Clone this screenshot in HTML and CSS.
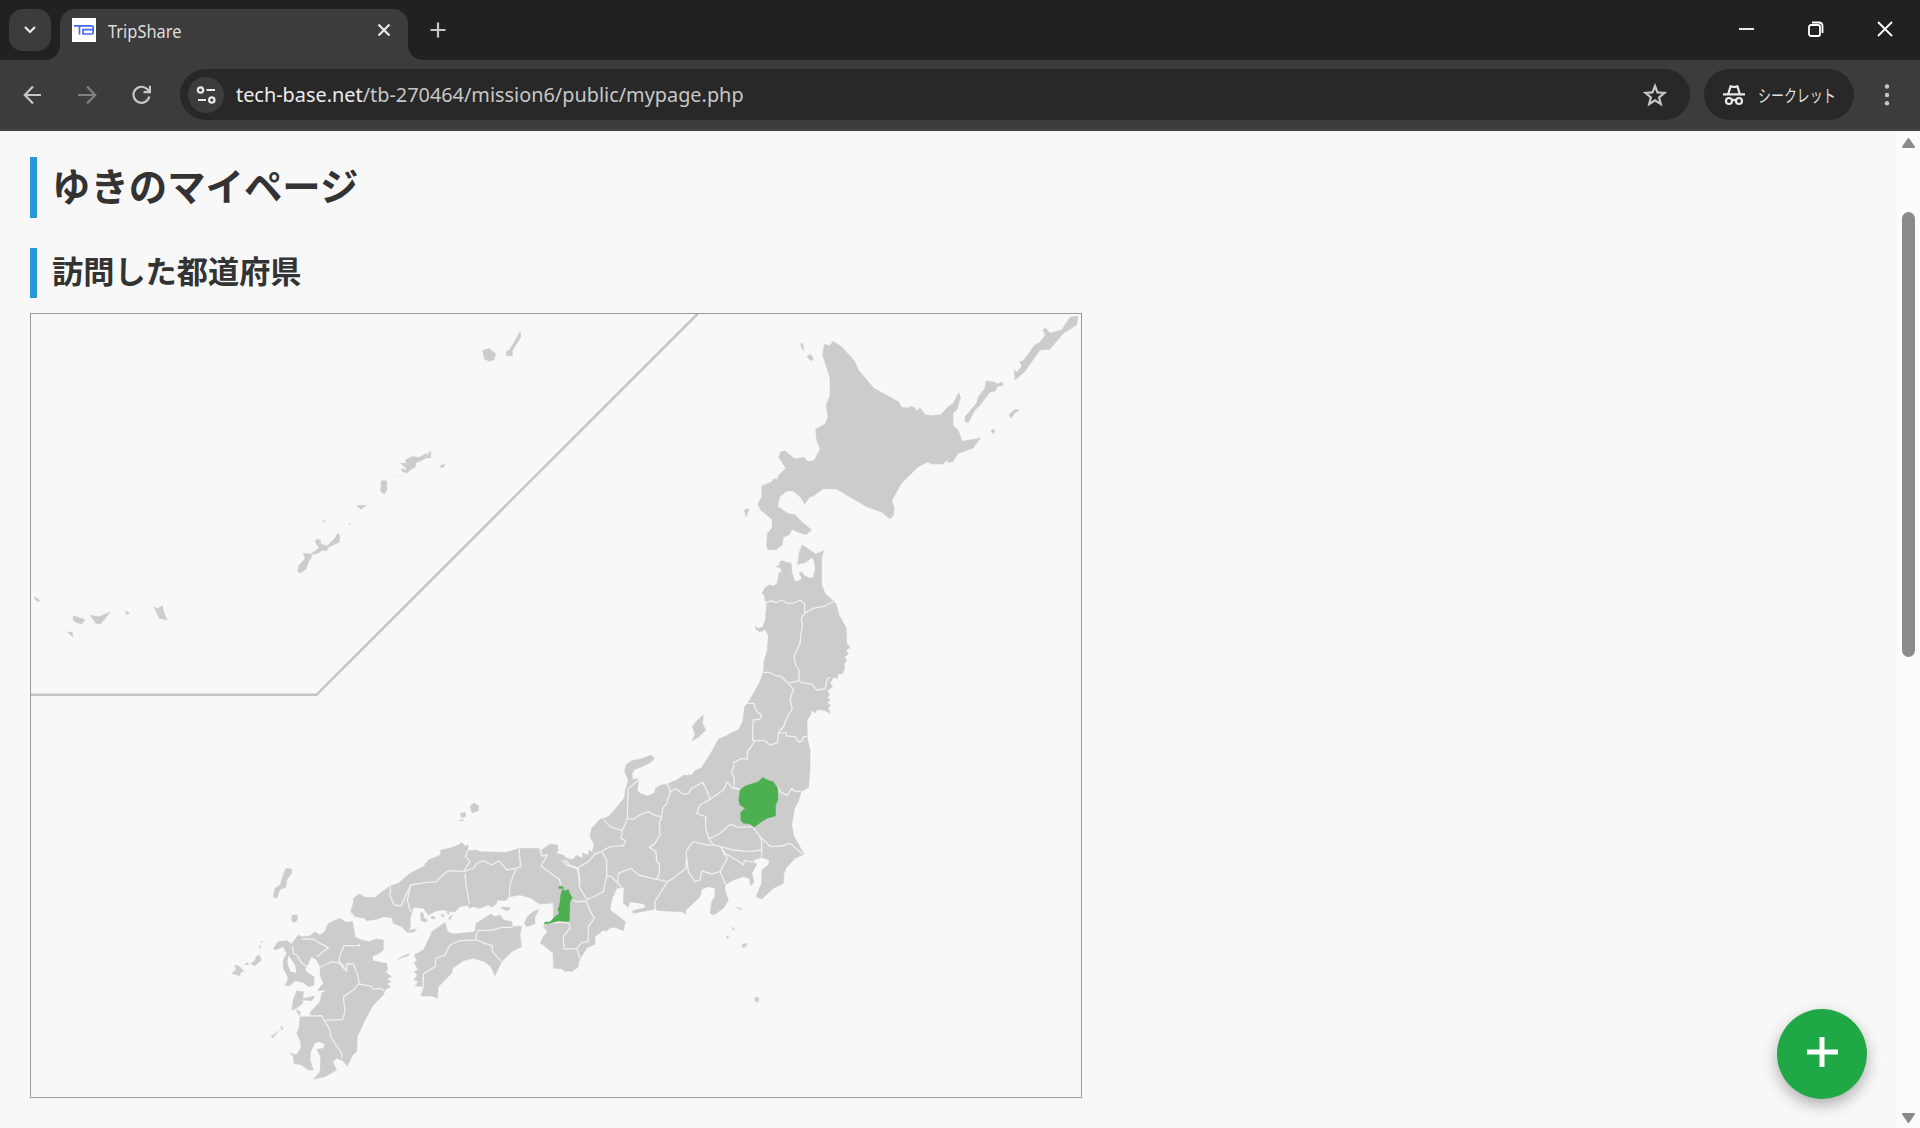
FILE: index.html
```html
<!DOCTYPE html>
<html lang="ja">
<head>
<meta charset="utf-8">
<title>TripShare</title>
<link rel="stylesheet" href="styles.css">
</head>
<body>
<div class="browser">
  <header class="tabstrip">
    <div class="tab-search"><svg width="14" height="10" viewBox="0 0 14 10"><path class="ln" d="M2 2l5 5 5-5"/></svg></div>
    <div class="tab">
      <svg class="favicon" width="24" height="24" viewBox="0 0 24 24"><rect width="24" height="24" fill="#fff"/><path d="M2 7.800H19.500Q21.200 7.800 21.200 9.500V14.500Q21.200 16 19.500 16H11V11.700H21M7.500 8V16.500" fill="none" stroke="#4169f1" stroke-width="1.700"/></svg>
      <span class="tab-title">TripShare</span>
      <svg class="tab-close" width="14" height="14" viewBox="0 0 14 14"><path class="ln" d="M1.500 1.500l11 11M12.500 1.500L1.500 12.500"/></svg>
    </div>
    <svg class="new-tab" width="16" height="16" viewBox="0 0 16 16"><path class="ln dim" d="M8 .5v15M.5 8h15"/></svg>
    <div class="window-controls">
      <svg width="16" height="16" viewBox="0 0 16 16"><path class="ctl" d="M0 8h15"/></svg>
      <svg width="16" height="16" viewBox="0 0 16 16"><rect class="ctl" x="1" y="4" width="11" height="11" rx="2"/><path class="ctl" d="M4 1.500h6.500Q14.500 1.500 14.500 5v7"/></svg>
      <svg width="16" height="16" viewBox="0 0 16 16"><path class="ctl" d="M1 1l14 14M15 1L1 15"/></svg>
    </div>
  </header>
  <nav class="toolbar">
    <svg class="nav-icon" width="20" height="20" viewBox="0 0 20 20"><path class="ln dim" d="M18 10H2M10 1.500L1.800 10l8.200 8.500"/></svg>
    <svg class="nav-icon off" width="20" height="20" viewBox="0 0 20 20"><path class="ln" d="M1 10h17M10 1.500l8.200 8.500-8.200 8.500"/></svg>
    <svg class="nav-icon" width="20" height="20" viewBox="0 0 20 20"><path class="ln dim" d="M18.300 11.500A8 8 0 1 1 16.800 4.800L18.500 7M19 .8V7.200H12.500"/></svg>
    <div class="address">
      <div class="site-info"><svg width="20" height="20" viewBox="0 0 20 20"><circle class="ln" cx="4.500" cy="5" r="2.700"/><path class="ln" d="M10.500 5H19M2 15h8"/><circle class="ln" cx="15.800" cy="15" r="2.700"/></svg></div>
      <span class="url"><b>tech-base.net</b>/tb-270464/mission6/public/mypage.php</span>
      <svg class="star" width="24" height="24" viewBox="0 0 24 24"><path class="ln dim" d="M12 3l2.500 6.400 7 .5-5.400 4.500 1.700 6.700L12 17.400l-5.800 3.700 1.700-6.700L2.500 9.900l7-.5z"/></svg>
    </div>
    <div class="incognito">
      <svg width="22" height="22" viewBox="0 0 22 22"><path class="ln" d="M0 10.400h22M5.200 10L7.600 2.300l2.200.5h2.400l2.200-.5L16.800 10M9 16.500q2-1.300 4 0"/><circle class="ln" cx="6" cy="17" r="3"/><circle class="ln" cx="16" cy="17" r="3"/></svg>
      <span>シークレット</span>
    </div>
    <svg class="menu" width="6" height="24" viewBox="0 0 6 24"><circle cx="3" cy="3.500" r="2.200"/><circle cx="3" cy="12" r="2.200"/><circle cx="3" cy="20.300" r="2.200"/></svg>
  </nav>
  <div class="viewport">
    <main class="page">
      <h1>ゆきのマイページ</h1>
      <h2>訪問した都道府県</h2>
      <div class="map">
        <svg width="1050" height="783" viewBox="31 314 1050 783">
          <path class="divider" d="M31 694.800H316.500L698.500 313"/>

          <!-- 北海道 -->
          <g class="land" transform="translate(730 310) scale(.33333)">
            <path d="M283 103L300 107 309 94 335 110 375 155 385 180 432 235 505 275 515 292 538 294 541 289 556 294 560 304 570 293 585 314 605 317 632 314 655 290 670 280 686 248 692 262 680 300 669 310 669 345 685 362 697 394 752 384 728 415 685 430 668 456 652 456 657 445 638 462 605 462 592 456 565 470 514 520 485 573 492 590 491 615 480 627 455 606 410 590 350 555 320 537 280 536 250 558 240 560 224 582 212 562 190 543 170 543 149 560 143 590 175 611 195 614 215 635 245 660 228 674 205 667 186 658 178 674 160 682 157 705 138 719 115 719 110 710 112 670 126 655 126 628 92 600 84 583 95 560 95 528 125 516 132 505 140 510 148 493 168 475 146 442 152 425 165 423 195 447 222 441 232 454 252 452 270 418 260 390 257 358 285 342 294 320 288 285 300 258 300 205 278 135Z"/>
            <path d="M212 102L218 100 222 124 214 112ZM231 140L240 132 251 147 242 152ZM43 600L57 596 48 622ZM705 320L728 293 740 280 745 260 765 235 768 213 790 215 803 222 817 215 818 228 803 228 795 244 780 246 765 265 748 288 735 300 715 338 705 335ZM853 180L861 187 875 170 870 155 880 152 914 105 930 97 946 75 939 60 947 54 960 70 995 60 1020 22 1044 18 1040 45 1000 70 960 118 930 120 885 184 855 210ZM837 314L855 298 868 301 855 308 843 325ZM783 363L790 357 795 363 789 371Z"/>
          </g>

          <!-- 東北 -->
          <g class="land" transform="translate(730 540) scale(.33333)">
            <path d="M-5 880V583L0 580 25 570 38 545 44 500 55 487 90 425 100 395 103 360 112 330 115 285 104 268 100 272 88 275 78 268 76 258 84 265 98 262 106 240 110 190 104 178 103 166 96 160 105 143 118 135 130 138 142 130 147 98 157 95 150 83 138 80 149 75 150 64 160 62 170 68 183 68 186 100 196 127 210 120 216 115 208 100 214 95 225 108 240 115 250 112 256 85 252 62 247 52 225 68 203 73 207 40 216 15 228 22 243 32 256 42 268 38 281 32 275 55 275 135 286 162 308 180 318 192 325 215 329 230 337 240 338 245 348 262 350 290 350 310 360 322 348 333 355 342 344 350 350 362 342 372 344 385 340 397 335 402 325 402 322 415 310 412 300 430 308 440 292 453 300 464 292 472 301 482 290 486 303 497 294 503 301 520 285 512 262 508 255 520 245 510 242 525 231 540 232 600 240 635 240 690 235 742 213 755 205 785 190 810 184 855 190 880Z"/>
          </g>

          <!-- 関東・中部 -->
          <g class="land" transform="translate(560 700) scale(.33333)">
            <path d="M568 5L556 20 552 60 540 90 475 118 455 155 425 203 405 212 395 225 370 226 350 240 322 252 300 256 287 265 283 280 262 288 240 280 232 270 236 240 228 235 218 240 216 222 222 210 245 200 270 188 282 178 280 170 270 166 245 176 215 182 198 195 194 215 205 240 198 265 192 295 165 328 145 350 120 358 95 385 90 410 102 432 97 456 88 450 84 466 68 458 68 475 50 465 38 480 20 482 0 462-20 475V805L5 806 15 815 50 805 58 780 80 745 105 732 105 710 130 690 140 693 150 684 165 682 190 692 196 665 170 645 150 630 155 600 170 565 192 562 190 610 205 622 210 605 252 612 258 622 218 632 220 640 285 628 298 632 365 635 378 643 376 632 420 590 425 568 445 560 465 565 465 590 455 605 450 640 462 645 490 625 505 600 495 570 495 555 520 540 550 530 568 535 572 558 582 545 575 520 590 495 580 480 605 472 628 480 625 495 605 510 605 550 588 590 605 597 640 565 670 550 672 520 678 505 705 475 732 463 700 405 695 375 705 315 722 275 745 262 750 150 740 110V5Z"/>
            <path d="M430 45L428 72 437 90 415 112 396 122 405 102 397 80 410 62ZM529 621L545 626 540 630ZM516 683L523 684 520 692ZM499 710L506 708 503 716ZM546 734L562 730 558 740 548 742Z"/>
          </g>

          <!-- 近畿・中国・四国 -->
          <g class="land" transform="translate(320 820) scale(.33333)">
            <path d="M92 275L100 250V235L118 222 135 232 165 232 210 198 235 190 270 160 310 140 325 120 362 105V90L390 85 415 75 425 68 437 78 445 75 443 92 470 90 480 95 560 97 597 85 655 85 665 90 690 72 712 75 715 92 708 100 730 105 740 115 765 120 775 112 775 440 755 455 735 450 715 435 700 420V400L670 375 661 370 670 350 682 335 670 320 690 305 710 290 718 265 718 245 690 250 658 252 635 235 600 225 568 230 555 242 532 240 530 250 515 262 505 255 480 265 460 260 447 265 445 255 420 260 405 275 385 275 370 270 350 272 325 285 310 265 280 262 272 290 270 325 262 338 245 320 220 310 215 293 190 290 170 298 140 302 132 294 105 290Z"/>
            <path d="M375 308L383 335 400 342 440 338 465 335 468 310 485 300 512 282 525 290 540 285 552 300 575 305 578 320 605 318 600 345 605 380 575 395 545 425 525 467 512 440 495 425 460 415 430 422 398 445 395 460 370 485 355 500 352 535 335 528 302 528 312 500 285 498 295 485 282 480 292 465 282 455 295 450 283 430 290 420 282 405 310 390 330 350 335 335ZM657 268L645 290V312L620 320 613 310 622 290 640 275ZM543 262H572L565 272 548 268ZM302 275L312 283 310 292 322 300 318 307 303 302ZM333 290H345L343 297 335 296ZM362 285L372 283 370 293ZM380 278L388 275 386 285ZM385 295L398 285 390 300ZM232 418L245 410 268 401 265 407ZM262 332L290 327 282 336 265 337ZM418 0H430L425 4Z"/>
          </g>

          <!-- 九州 -->
          <g class="land" transform="translate(220 790) scale(.33333)">
            <path d="M325 400L360 385 378 397 398 395 405 440 420 448 445 455 470 447 490 450V480L475 492 458 498V512L500 520 503 540 496 545 515 560 500 567 514 575 500 582 512 590 495 600 490 615 460 645 435 690 412 740 410 785 398 795 382 828 368 812 350 805 338 815 350 840 315 860 280 868 300 845 302 800 290 778 310 775 314 762 298 755 285 758 272 785 270 810 280 840 265 840 245 825 222 820 220 800 210 790 228 795 243 775 242 755 230 730 238 710 240 680 270 680 272 665 300 635 305 610 320 600 292 602 310 580 300 555V530L290 510 275 500 265 520 255 540 265 550 282 560V585L265 590 250 578 225 572 210 587 195 587 205 565 190 535V510L200 490 190 470 165 480 160 475 175 455 200 452 215 462 235 435 245 440 270 438 285 425 300 435 315 425Z"/>
            <path d="M230 603L250 605 248 640 230 655 215 660 220 630ZM246 626L285 618 275 632 250 630ZM228 660L242 665 238 677ZM198 235L215 237V250L200 270 198 292 180 298 170 325 160 320 165 295 180 285 190 255ZM215 375L232 375V390L222 398 212 388 218 386ZM35 550L48 540 45 525 60 530 72 545 62 545 60 557ZM92 520L105 512 108 500 118 495 124 510 112 520 105 528ZM74 523L84 518 85 524ZM118 470L124 465 120 475ZM123 455L128 453 125 459ZM153 740L175 723 165 736 158 743ZM182 708L190 716 185 720Z"/>
            <path class="sea" d="M206 495L215 510 225 525 229 548 212 545 202 520ZM288 772L298 768 296 778Z"/>
          </g>

          <!-- 県境 -->
          <path class="line" transform="translate(730 540) scale(.33333)" d="M106 187L125 183 140 187 155 180 172 190 195 188 210 180 224 192V220L250 205 285 198 312 183M224 220L214 235 217 260 213 280 210 310 198 335 192 350 197 375 207 390V422M100 397L118 397 140 408 152 408 175 430 207 422 215 428 245 432 260 450 285 447 292 415 302 413M175 430L190 448 180 480 187 505 168 540 160 562 145 577M52 490L72 490 78 512 94 525 90 537 70 540 68 570V602L105 602 120 615 143 608 145 580 168 578 170 588 195 590 205 606 217 603 220 590 232 590M75 603L65 618 52 635V658L35 655 12 667 10 685 3 695 12 710V742L30 748M143 740L150 755 172 767 185 745 195 755 213 753"/>
          <path class="line" transform="translate(560 700) scale(.33333)" d="M320 252L328 262 330 278 345 265 370 282 385 280 395 265 428 247 440 270 450 298 490 270 502 247 518 264 540 268M450 298L420 315 410 340 437 350 437 385 447 417 480 400 512 373 535 382 578 380 600 410 605 425V470M447 417L460 435 482 440 520 450 570 455 604 450M598 408L632 440 665 438 690 430 728 463M482 440L495 460 530 480 550 495 553 482 590 488M460 435L440 435 400 425 390 437 378 455 385 515 405 545 420 540 425 513 455 522 480 515 502 475 485 450M480 515L497 553M378 475V505L340 535 323 545 290 538M330 278L320 310 308 325 305 350 298 370 300 405 285 430 268 442 288 455 290 485 298 490V520L290 538M305 350L285 347 265 335 235 347 220 358 202 355M236 240L205 265 203 305 202 355 187 392 183 415 197 422 190 437 150 440 125 455M130 358L150 380 187 392M125 455L105 462 85 485 50 505 20 495 5 480M125 455L140 480V527L155 530 173 550 175 520 213 505 235 525 290 538M173 550L185 562M323 545L300 580 285 605V630M50 505L60 535 58 560 75 590 85 600M140 527L130 575 105 588 85 597M45 605L80 605 90 632 103 655 85 680V725L65 728 50 745 12 747 10 710 30 685 25 662M50 745L60 775"/>
          <path class="line" transform="translate(320 820) scale(.33333)" d="M210 198L212 215 208 222 222 255 243 258 258 225 272 195 315 188 350 185 358 175 385 152 430 155 450 125 437 110 443 90M272 195L262 240 272 275M430 155L460 145 470 130 490 122 515 135 538 122 560 150 590 145 602 140 597 85M588 150L580 165 570 195 568 230M435 160L438 195 448 250M660 85L665 108 682 105 663 138 700 165 718 178 722 195M735 120L750 135 775 145 778 190M757 240L770 245 800 243M685 308L745 308M310 500V462L345 440 348 415 375 405 390 375 420 362 470 360 495 370 517 377V395L545 425M470 360L468 345 475 332 520 330 545 322 578 322"/>
          <path class="line" transform="translate(220 790) scale(.33333)" d="M245 447H280L300 460 325 473 290 500M218 470L220 490 230 495 245 518 265 535M298 532L315 525 335 515 365 520 380 545V522L400 522 410 545 418 580 400 600 370 620 375 665 368 688 315 692M418 462V467L372 467 358 500V520L380 545M418 582L455 590 460 598 480 595 492 602M270 678L305 677 330 720 332 740 348 765 365 790V803"/>

          <!-- 沖縄・奄美 -->
          <g class="land" transform="translate(30 310) scale(.33333)">
            <path d="M1358 122L1377 115 1397 132 1392 150 1378 154 1363 147ZM1471 64L1472 82 1447 122 1447 138 1428 136 1430 124 1440 118ZM1112 460L1130 460 1126 450 1145 440 1168 442 1190 430 1188 445 1158 458 1155 472 1140 480 1130 490 1115 483 1116 475 1128 482 1128 474ZM1190 444L1196 428 1203 424 1201 444ZM1228 468L1246 462 1238 474ZM1054 512L1070 512 1071 540 1063 552 1052 545ZM981 587L1010 586 992 598ZM862 686L872 692 872 702 892 707 915 685 923 670 929 675 928 696 896 712 889 723 878 720 865 730 845 733 845 742 835 755 828 778 810 789 804 785 805 768 825 746 820 730 842 732 868 714 855 695Z"/>
            <path d="M12 863L22 864 30 874 20 874ZM129 917L166 929 155 942 140 938 130 932ZM181 916L208 920 241 905 212 942 197 940ZM285 903L299 909 290 914ZM371 890L382 897 397 887 402 908 412 930 388 925ZM112 966L127 967 128 981Z"/>
            <path class="islet" d="M876 636L890 626 883 637ZM955 640L963 643 960 647ZM1101 494L1107 496 1102 498ZM1112 495L1119 499 1114 500Z"/>
          </g>
          <path class="isle" d="M470 806l4-3 5 3-1 5-6 2-1-4zM460 814l5-2 1 4-4 2zM755 997l4 1-1 4-3-1zM292 918l3-3 3 4-4 3z"/>

          <path class="visited" transform="translate(730 540) scale(.33333)" d="M30 750L45 738 85 725 98 712 112 720 130 725 143 745 144 780 137 795V828L112 835 95 845 72 862 60 852 40 850 32 840V818L45 805 30 795 26 780Z"/>
          <path class="visited" transform="translate(320 820) scale(.33333)" d="M727 208L735 212 745 208 750 222 757 232 750 245 748 305 715 302 695 308 672 313 675 306 690 306 705 290 718 280 713 268 718 258 722 225ZM715 200L725 199 733 205 718 206Z"/>
        </svg>
      </div>
      <button class="fab" type="button"><svg width="32" height="32" viewBox="0 0 32 32"><path d="M16 1v30M1 16h31"/></svg></button>
    </main>
    <div class="scrollbar">
      <svg width="15" height="12" viewBox="0 0 15 12"><path d="M7.500 2L13 10H2Z"/></svg>
      <div class="track"><div class="thumb"></div></div>
      <svg width="15" height="12" viewBox="0 0 15 12"><path d="M7.500 10L13 2H2Z"/></svg>
    </div>
  </div>
</div>
</body>
</html>
```
FILE: styles.css
```css
* { box-sizing: border-box; }
body { margin: 0; background: #f8f8f8; font-family: "Noto Sans CJK JP", sans-serif; color: #333; }
svg { display: block; flex: none; }
.browser { display: flex; flex-direction: column; height: 1128px; overflow: hidden; }

.ln { fill: none; stroke: #e8e8e8; stroke-width: 2.2; }
.dim { stroke: #c7c7c7; }
.ctl { fill: none; stroke: #fff; stroke-width: 1.8; }

.tabstrip { display: flex; height: 60px; background: #202221; font-family: "Noto Sans", sans-serif; }
.tab-search { display: flex; align-items: center; justify-content: center; width: 42px; height: 42px; margin: 9px 9px 0; border-radius: 14px; background: #3c3c3c; }
.tab { position: relative; display: flex; align-items: center; width: 348px; height: 51px; margin-top: 9px; padding: 0 17px 9px 12px; border-radius: 15px 15px 0 0; background: #3c3c3c; }
.tab::before, .tab::after { content: ""; position: absolute; bottom: 0; width: 15px; height: 15px; }
.tab::before { left: -15px; background: radial-gradient(circle at 0 0, transparent 14.500px, #3c3c3c 15.500px); }
.tab::after { right: -15px; background: radial-gradient(circle at 100% 0, transparent 14.500px, #3c3c3c 15.500px); }
.tab-title { margin: 3px auto 0 12px; color: #dedede; font-size: 17.300px; transform: scaleX(.95); transform-origin: left; }
.new-tab { margin: 22px 0 0 22px; }
.window-controls { display: flex; gap: 53px; margin: 21px 27px 0 auto; }

.toolbar { display: flex; align-items: center; height: 71px; padding: 0 30px 2px 23px; background: linear-gradient(#3c3c3c 69px, #494949 69px, #494949 70px, #3c3c3c 70px); }
.nav-icon { margin-right: 34px; }
.nav-icon.off { opacity: .4; }
.address { display: flex; align-items: center; width: 1510px; height: 51px; margin-left: -5px; padding: 0 23px 0 8px; border-radius: 26px; background: #282828; }
.site-info { display: flex; align-items: center; justify-content: center; width: 36px; height: 36px; border-radius: 50%; background: #3c3c3c; }
.url { margin: -2px auto 0 12px; color: #c7c7c7; font: 20.800px "Noto Sans", sans-serif; white-space: nowrap; transform: scaleX(.955); transform-origin: left; }
.url b { color: #ececec; font-weight: 400; }
.incognito { display: flex; align-items: center; gap: 13px; width: 150px; height: 51px; margin-left: 14px; padding-left: 19px; border-radius: 26px; background: #282828; color: #dedede; font-size: 17.500px; white-space: nowrap; }
.incognito span { width: 76px; margin-top: -1px; transform: scaleX(.74); transform-origin: left; }
.menu { margin-left: auto; fill: #c7c7c7; }

.viewport { display: flex; flex: 1; min-height: 0; }
.page { flex: 1; padding: 26px 30px 0; }
h1, h2 { margin: 0; padding-left: 15px; border-left: 7px solid #2b96d9; font-weight: 700; }
h1 { height: 61px; margin-bottom: 30px; font-size: 38.400px; line-height: 55px; }
h2 { height: 50px; margin-bottom: 15px; font-size: 31.200px; line-height: 44px; }
.map { width: 1052px; height: 785px; border: 1px solid #999; }
.land path, .isle { fill: #ccc; stroke: #ccc; stroke-width: 1.500; }
.isle { stroke-width: .5; }
.land .islet { stroke: none; }
.land .sea { fill: #f8f8f8; stroke: none; }
.line { fill: none; stroke: #efefef; stroke-width: 4; stroke-linejoin: round; }
.divider { fill: none; stroke: #c4c4c4; stroke-width: 2.400; }
.visited { fill: #4caf50; stroke: #4caf50; stroke-width: 1; }
.fab { position: fixed; right: 53px; bottom: 29px; display: flex; align-items: center; justify-content: center; width: 90px; height: 90px; padding: 0 0 4px; border: 0; border-radius: 50%; background: #20a846; box-shadow: 0 6px 15px rgba(0, 0, 0, .3); }
.fab path { fill: none; stroke: #fff; stroke-width: 5; }
.scrollbar { display: flex; flex-direction: column; align-items: center; width: 23px; padding: 6px 0 4px; background: #fcfcfc; }
.scrollbar path { fill: #8b8b8b; stroke: #8b8b8b; stroke-width: 2; stroke-linejoin: round; }
.track { flex: 1; padding-top: 63px; }
.thumb { width: 13px; height: 445px; border-radius: 7px; background: #8b8b8b; }
```
